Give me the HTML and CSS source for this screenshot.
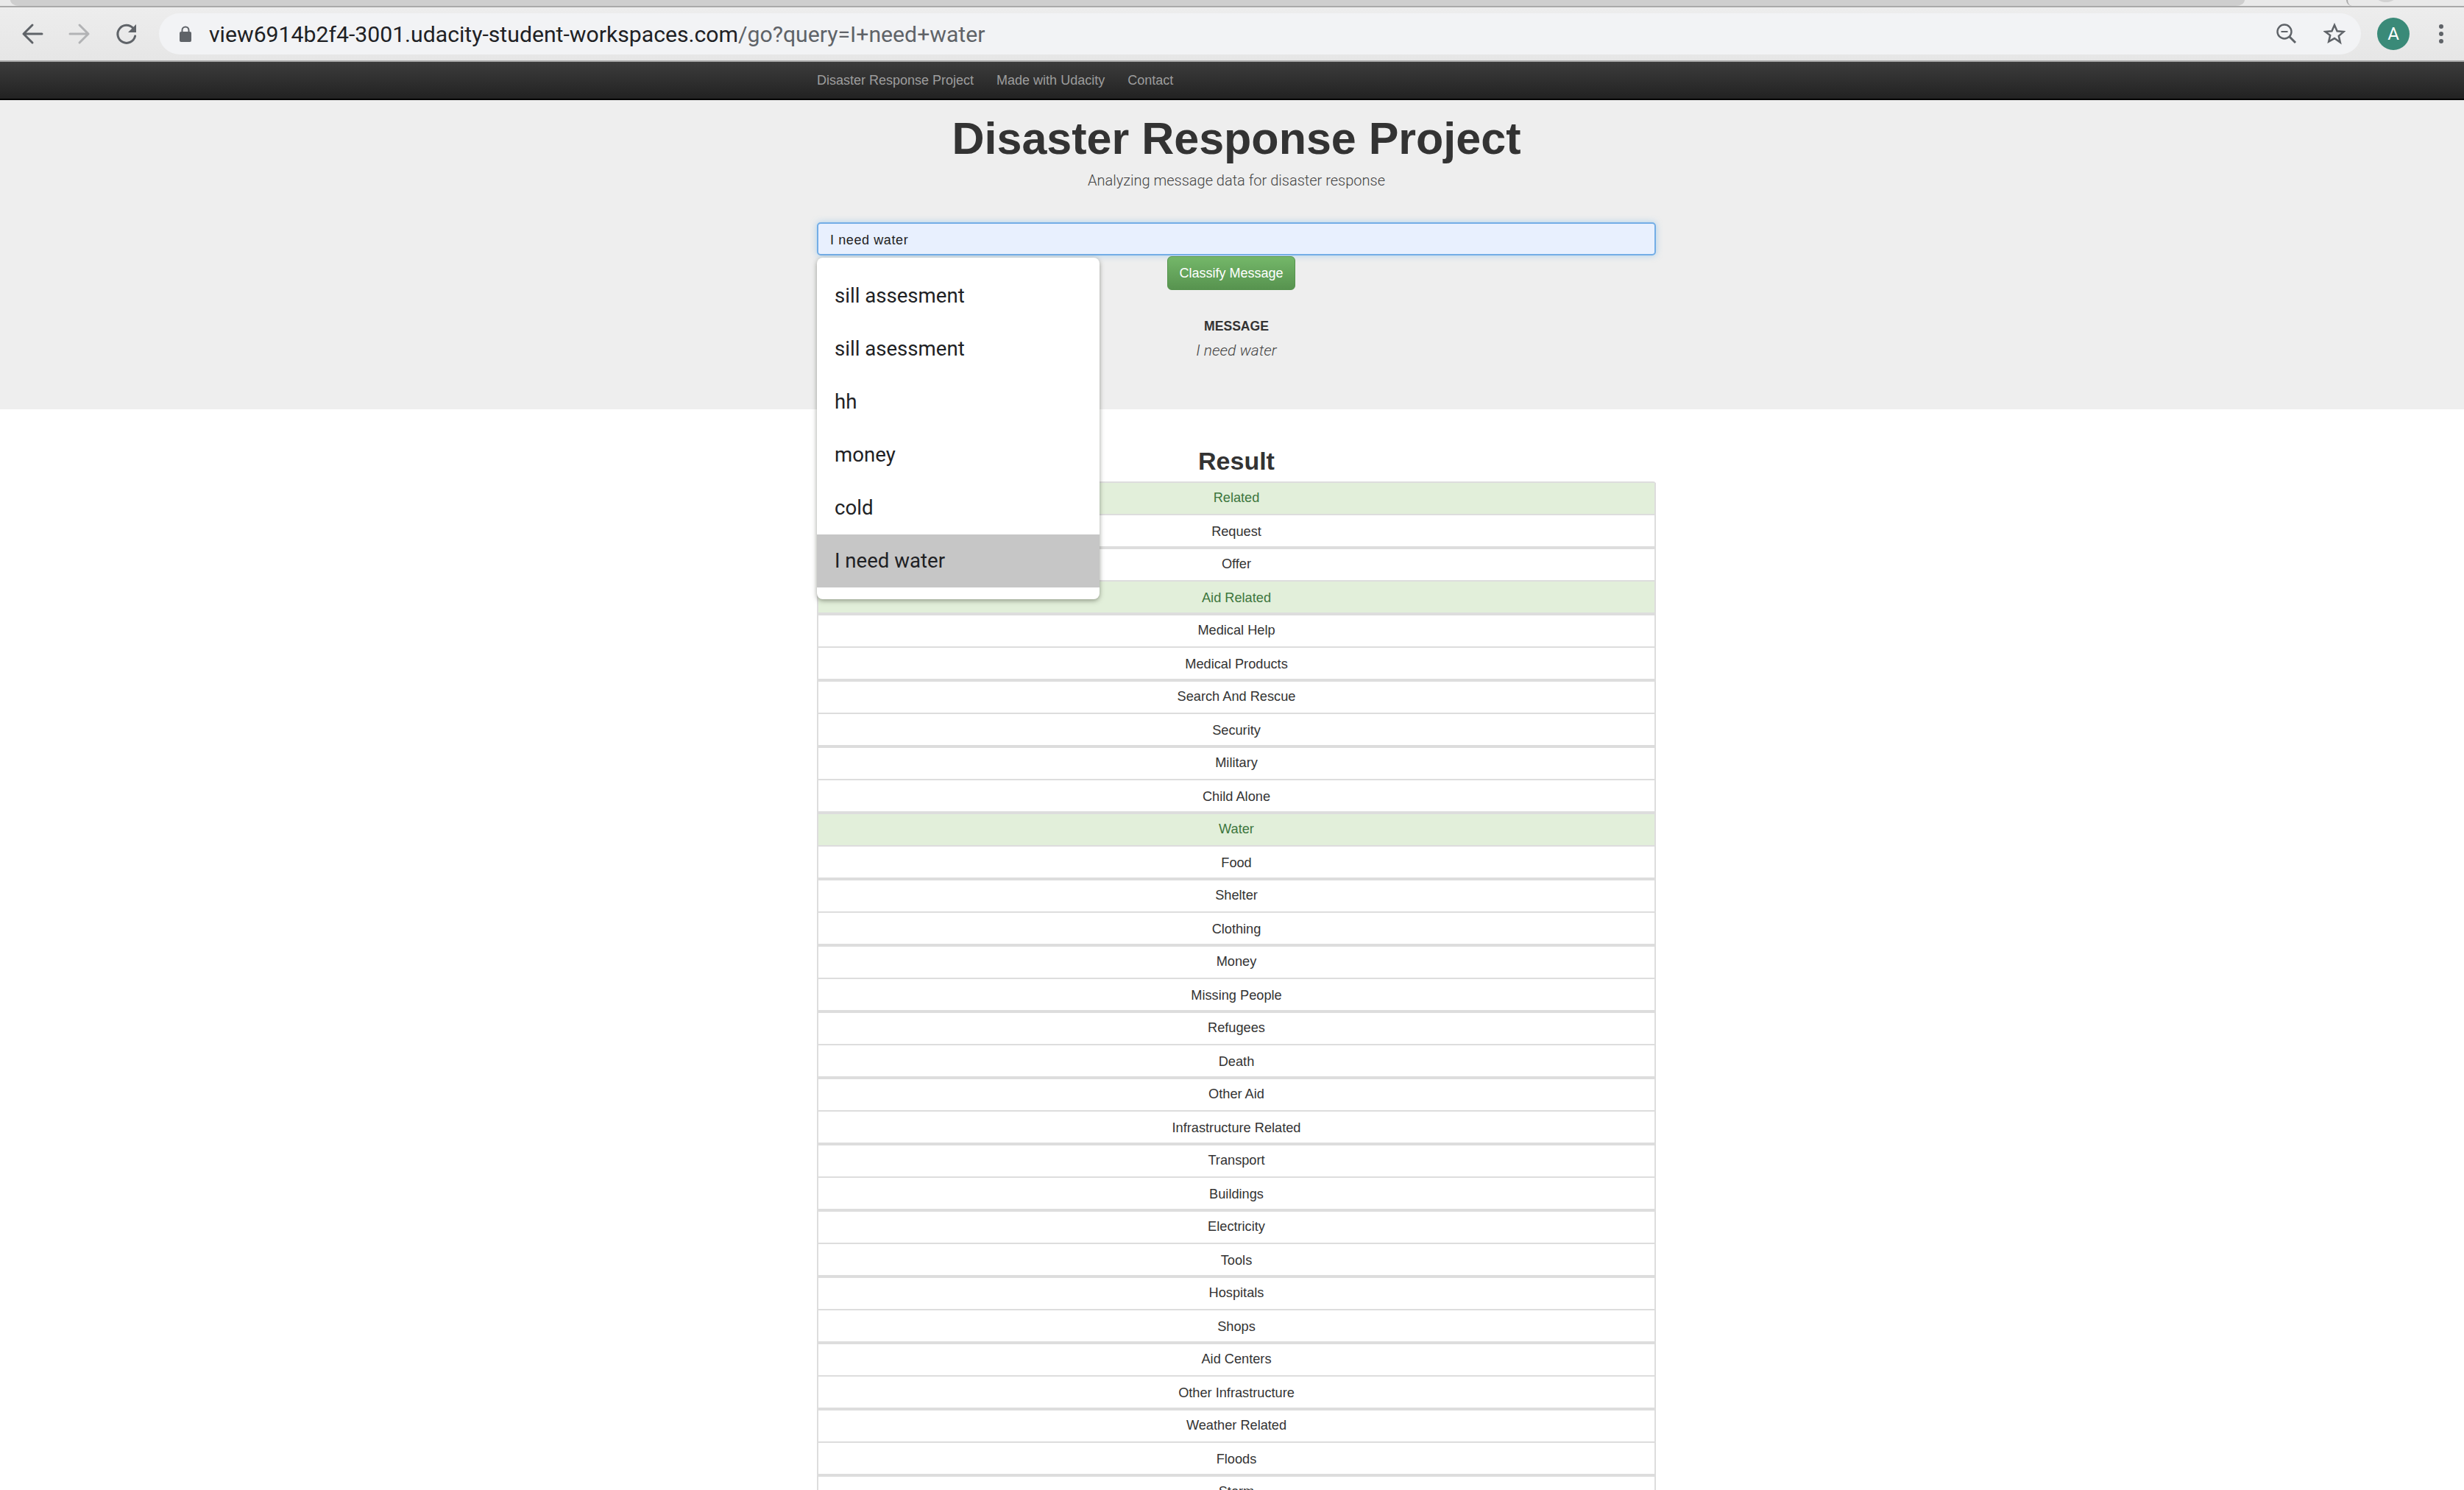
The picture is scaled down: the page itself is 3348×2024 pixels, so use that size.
FILE: index.html
```html
<!DOCTYPE html>
<html lang="en">

<head>
  <meta charset="UTF-8">
  <title>Disaster Response Project</title>
  <link rel="stylesheet" href="styles.css">
</head>

<body>
  <div class="tabstrip">
    <div class="tab-gap-left"></div>
    <div class="tab-active"></div>
    <div class="tab-gap"></div>
    <div class="tab-other"><span class="tab-favicon"></span></div>
  </div>

  <div class="toolbar">
    <svg class="tool-icon" width="32" height="32" viewBox="0 0 32 32"><path d="M29 16H4M16 4L4 16l12 12" fill="none" stroke="#5f6368" stroke-width="3" stroke-linecap="round" stroke-linejoin="round"/></svg>
    <svg class="tool-icon" width="32" height="32" viewBox="0 0 32 32"><path d="M3 16h25M16 4l12 12-12 12" fill="none" stroke="#b2b3b5" stroke-width="3" stroke-linecap="round" stroke-linejoin="round"/></svg>
    <svg class="tool-icon" width="32" height="32" viewBox="0 0 32 32"><path d="M25 8.5A12 12 0 1 0 27.6 19" fill="none" stroke="#5f6368" stroke-width="3" stroke-linecap="round"/><path d="M29 3v11H18z" fill="#5f6368"/></svg>
    <div class="omnibox">
      <svg class="lock" width="16" height="22" viewBox="0 0 16 22"><path d="M3.5 9V6a4.500 4.500 0 0 1 9 0v3" fill="none" stroke="#5f6368" stroke-width="2"/><rect y="8" width="16" height="14" rx="2" fill="#5f6368"/></svg>
      <span class="url">view6914b2f4-3001.udacity-student-workspaces.com<span class="url-path">/go?query=I+need+water</span></span>
      <svg class="omni-zoom" width="28" height="28" viewBox="0 0 28 28"><circle cx="11" cy="11" r="9.5" fill="none" stroke="#5f6368" stroke-width="2.4"/><path d="M6.500 11h9" stroke="#5f6368" stroke-width="2"/><path d="M18 18l8 8" stroke="#5f6368" stroke-width="3"/></svg>
      <svg class="omni-star" width="30" height="30" viewBox="0 0 30 30"><path d="M15 3l3.600 8.200 8.900.8-6.700 5.900 2 8.700L15 21.100l-7.800 4.500 2-8.700L2.500 12l8.900-.8z" fill="none" stroke="#5f6368" stroke-width="2.500" stroke-linejoin="miter"/></svg>
    </div>
    <div class="avatar">A</div>
    <div class="menu-dots"><span></span><span></span><span></span></div>
  </div>

  <nav class="navbar">
    <a href="#">Disaster Response Project</a>
    <a href="#">Made with Udacity</a>
    <a href="#">Contact</a>
  </nav>

  <div class="jumbotron">
    <div class="container">
      <h1>Disaster Response Project</h1>
      <p class="lead">Analyzing message data for disaster response</p>
      <div class="query-form">
        <input class="query-input" type="text" value="I need water">
        <ul class="suggestions">
          <li>sill assesment</li>
          <li>sill asessment</li>
          <li>hh</li>
          <li>money</li>
          <li>cold</li>
          <li class="selected">I need water</li>
        </ul>
        <div class="btn-row">
          <button class="btn-classify">Classify Message</button>
        </div>
      </div>
      <div class="message-label">MESSAGE</div>
      <div class="message-text">I need water</div>
    </div>
  </div>

  <div class="container">
    <h2>Result</h2>
    <ul class="list-group">
      <li class="yes">Related</li>
      <li>Request</li>
      <li>Offer</li>
      <li class="yes">Aid Related</li>
      <li>Medical Help</li>
      <li>Medical Products</li>
      <li>Search And Rescue</li>
      <li>Security</li>
      <li>Military</li>
      <li>Child Alone</li>
      <li class="yes">Water</li>
      <li>Food</li>
      <li>Shelter</li>
      <li>Clothing</li>
      <li>Money</li>
      <li>Missing People</li>
      <li>Refugees</li>
      <li>Death</li>
      <li>Other Aid</li>
      <li>Infrastructure Related</li>
      <li>Transport</li>
      <li>Buildings</li>
      <li>Electricity</li>
      <li>Tools</li>
      <li>Hospitals</li>
      <li>Shops</li>
      <li>Aid Centers</li>
      <li>Other Infrastructure</li>
      <li>Weather Related</li>
      <li>Floods</li>
      <li>Storm</li>
    </ul>
  </div>
</body>

</html>
```

FILE: styles.css
```css
html, body {
  height: 100%;
  overflow: hidden;
}

body {
  margin: 0;
  background: #fff;
  font-family: "Liberation Sans", Arial, sans-serif;
  color: #333;
}

/* browser chrome */
.tabstrip {
  display: flex;
  height: 8px;
  background: #e9e9e9;
  border-bottom: 2px solid #a9a9a9;
}

.tab-gap-left {
  width: 14px;
}

.tab-active {
  width: 3036px;
  background: #cecece;
  border-radius: 0 0 12px 12px / 0 0 8px 8px;
}

.tab-gap {
  width: 138px;
}

.tab-other {
  flex: 1;
  display: flex;
  justify-content: center;
  overflow: hidden;
  border-left: 2px solid #a9a9a9;
  border-radius: 0 0 0 12px;
}

.tab-favicon {
  width: 40px;
  height: 40px;
  margin: -37px 54px 0 0;
  border-radius: 50%;
  background: #d2d2d2;
}

.toolbar {
  display: flex;
  align-items: center;
  height: 72px;
  padding-left: 28px;
  background: linear-gradient(#ededed, #e6e6e6);
  border-bottom: 2px solid #aaa;
  box-sizing: content-box;
}

.tool-icon {
  margin-right: 32px;
  flex: none;
}

.omnibox {
  display: flex;
  align-items: center;
  width: 2992px;
  height: 56px;
  margin-left: -4px;
  padding-left: 28px;
  box-sizing: border-box;
  background: #f2f3f5;
  border-radius: 28px;
  flex: none;
}

.lock {
  margin-right: 24px;
}

.url {
  font-family: Roboto, sans-serif;
  font-size: 30.2px;
  color: #202124;
  white-space: nowrap;
}

.url-path {
  color: #5f6368;
}

.omni-zoom {
  margin-left: auto;
  margin-right: 36px;
}

.omni-star {
  margin-right: 21px;
}

.avatar {
  width: 44px;
  height: 44px;
  margin-left: 22px;
  border-radius: 50%;
  background: #3a8a78;
  color: #fff;
  font-family: Roboto, sans-serif;
  font-size: 24px;
  line-height: 44px;
  text-align: center;
  flex: none;
}

.menu-dots {
  display: flex;
  flex-direction: column;
  gap: 4px;
  margin-left: 40px;
}

.menu-dots span {
  width: 6px;
  height: 6px;
  border-radius: 50%;
  background: #5f6368;
}

/* page */
.navbar {
  display: flex;
  gap: 31px;
  height: 50px;
  padding-left: 1110px;
  align-items: center;
  background: linear-gradient(#3c3c3c, #222);
  border-bottom: 2px solid #000;
}

.navbar a {
  color: #9d9d9d;
  font-size: 18px;
  text-decoration: none;
}

.container {
  width: 1140px;
  margin-left: 1110px;
  text-align: center;
}

.jumbotron {
  height: 420px;
  background: #eee;
}

h1 {
  margin: 0;
  padding-top: 16px;
  font-size: 61px;
  line-height: 72px;
  font-weight: bold;
  color: #333;
}

.lead {
  margin: 8px 0 0;
  font-size: 20px;
  line-height: 26px;
  font-family: Roboto, sans-serif;
  font-weight: 300;
  color: #444;
}

.query-form {
  position: relative;
  margin-top: 44px;
}

.query-input {
  display: block;
  width: 100%;
  height: 45px;
  padding: 3px 16px 0;
  box-sizing: border-box;
  border: 2px solid #73ade6;
  border-radius: 5px;
  background: #e8f0fe;
  box-shadow: 0 0 8px rgba(102, 175, 233, .5);
  color: #222;
  font-family: "Liberation Sans", sans-serif;
  font-size: 18px;
  letter-spacing: .6px;
  outline: none;
}

/* the autofill menu sits over the form and the result list */
.suggestions {
  position: absolute;
  top: 48px;
  left: 0;
  z-index: 2;
  width: 384px;
  margin: 0;
  padding: 16px 0;
  list-style: none;
  text-align: left;
  background: #fff;
  border-radius: 8px;
  box-shadow: 0 2px 6px rgba(60, 64, 50, .5);
}

.suggestions li {
  height: 72px;
  padding-left: 24px;
  font-family: Roboto, sans-serif;
  font-size: 27.6px;
  line-height: 72px;
  color: #202124;
}

.suggestions .selected {
  background: #c6c6c6;
}

.btn-row {
  display: flex;
  padding-left: 476px;
  margin-top: 1px;
}

.btn-classify {
  width: 174px;
  height: 46px;
  padding: 0;
  border: 1px solid #56934e;
  border-radius: 6px;
  background: linear-gradient(#74b769, #57934f);
  color: #fff;
  font-family: "Liberation Sans", sans-serif;
  font-size: 18px;
}

.message-label {
  margin-top: 38px;
  font-size: 17.6px;
  line-height: 22px;
  font-weight: bold;
  color: #333;
}

.message-text {
  margin-top: 10px;
  font-family: Roboto, sans-serif;
  font-size: 21px;
  line-height: 24px;
  font-style: italic;
  font-weight: 300;
  color: #444;
}

h2 {
  margin: 0;
  padding-top: 42px;
  font-size: 34px;
  line-height: 56px;
  font-weight: bold;
  color: #333;
}

.list-group {
  margin: 0;
  padding: 0;
  list-style: none;
  border-top: 2px solid #ddd;
  border-radius: 4px 4px 0 0;
}

.list-group li {
  height: 42px;
  line-height: 40px;
  font-size: 18.2px;
  color: #333;
  background: #fff;
  border-left: 2px solid #ddd;
  border-right: 2px solid #ddd;
  border-bottom: 2px solid #ddd;
}

.list-group li:nth-child(even) {
  line-height: 44px;
  border-bottom-width: 4px;
}

.list-group .yes {
  background: #e2efda;
  color: #3c763d;
}
```
